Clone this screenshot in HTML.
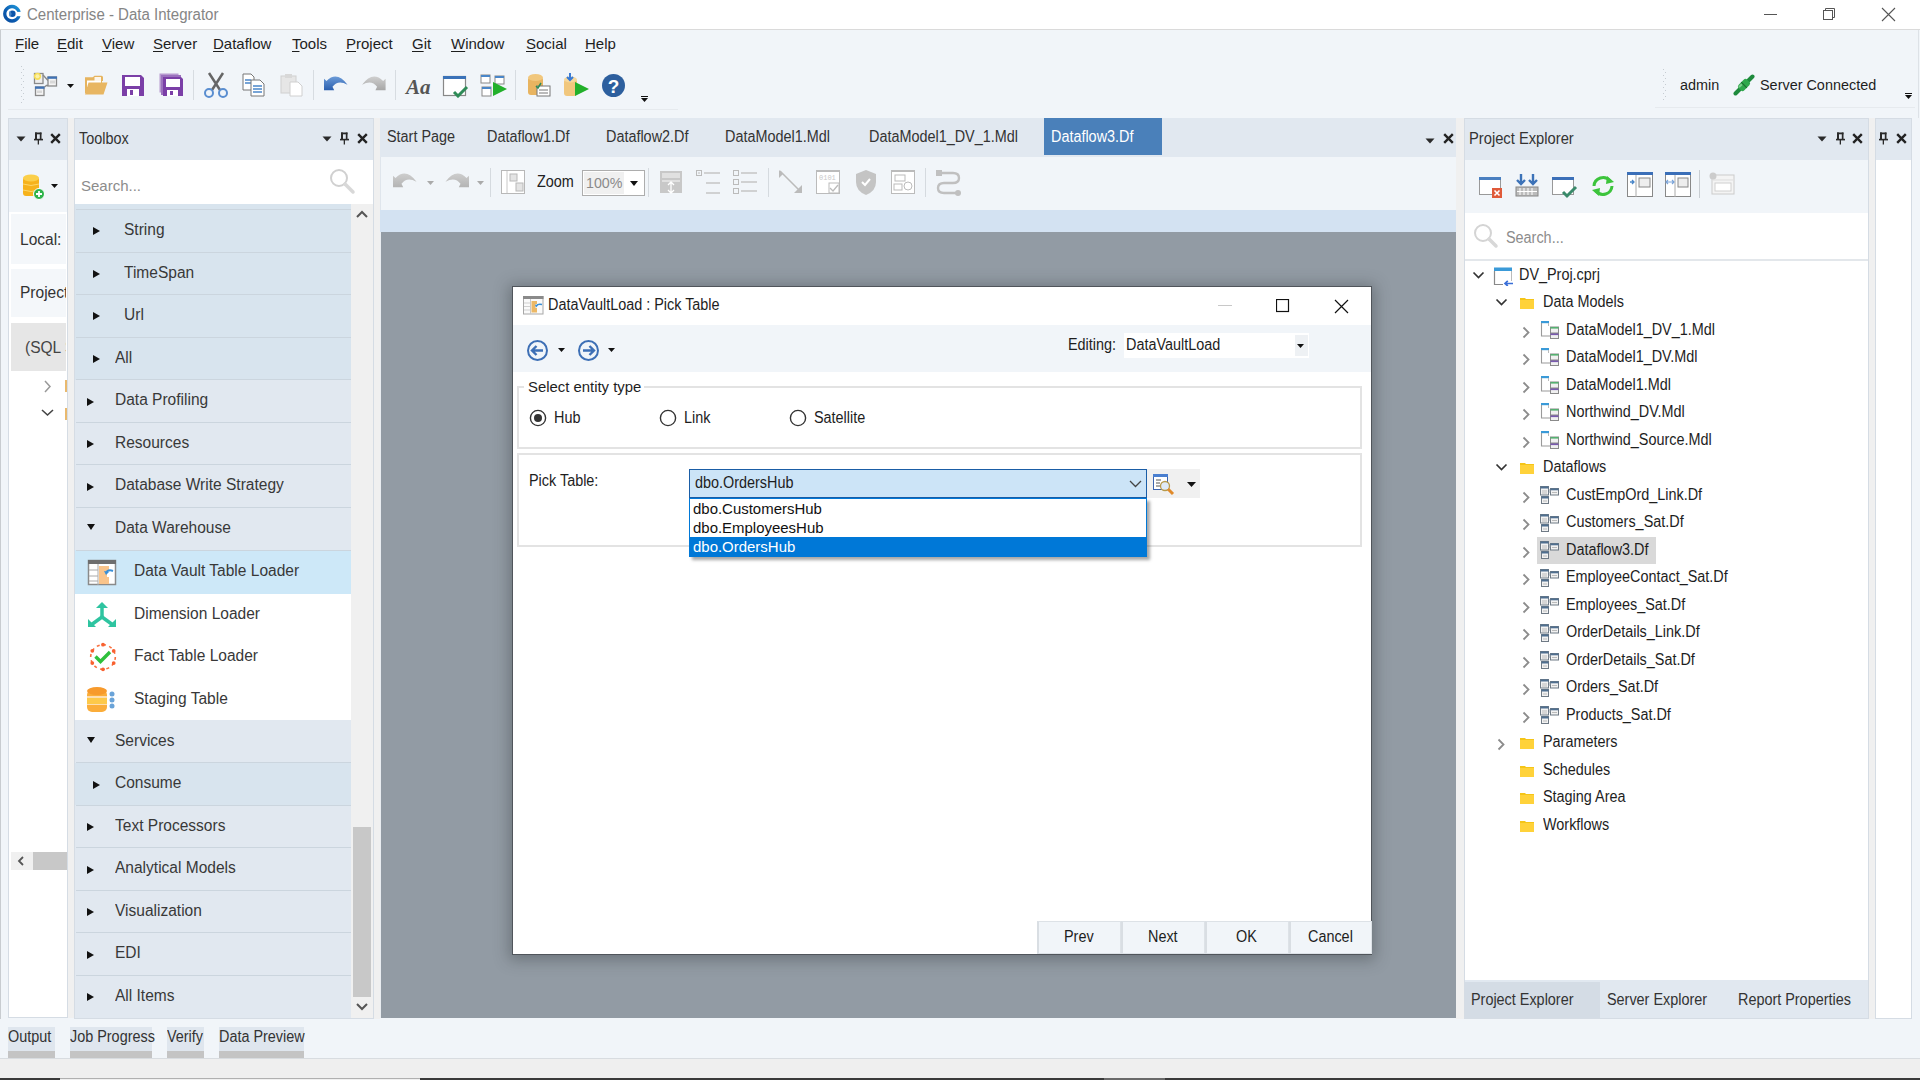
<!DOCTYPE html>
<html><head><meta charset="utf-8"><style>
html,body{margin:0;padding:0}
body{width:1920px;height:1080px;position:relative;overflow:hidden;background:#f1f5f9;font-family:"Liberation Sans",sans-serif;}
.a{position:absolute;box-sizing:border-box}
.t{white-space:nowrap}
</style></head><body>
<div class="a" style="left:0px;top:0px;width:1920px;height:29px;background:#ffffff;"></div>
<div class="a" style="left:0px;top:29px;width:1920px;height:1px;background:#dadada;"></div>
<div class="a t" style="left:27px;top:7px;font-size:16px;line-height:16px;color:#858585;transform:scaleX(0.94);transform-origin:0 0;">Centerprise - Data Integrator</div>
<div class="a t" style="left:15px;top:36px;font-size:15px;line-height:15px;color:#1e1e1e;"><u style="text-decoration-thickness:1px;text-underline-offset:2px">F</u>ile</div>
<div class="a t" style="left:57px;top:36px;font-size:15px;line-height:15px;color:#1e1e1e;"><u style="text-decoration-thickness:1px;text-underline-offset:2px">E</u>dit</div>
<div class="a t" style="left:102px;top:36px;font-size:15px;line-height:15px;color:#1e1e1e;"><u style="text-decoration-thickness:1px;text-underline-offset:2px">V</u>iew</div>
<div class="a t" style="left:153px;top:36px;font-size:15px;line-height:15px;color:#1e1e1e;"><u style="text-decoration-thickness:1px;text-underline-offset:2px">S</u>erver</div>
<div class="a t" style="left:213px;top:36px;font-size:15px;line-height:15px;color:#1e1e1e;"><u style="text-decoration-thickness:1px;text-underline-offset:2px">D</u>ataflow</div>
<div class="a t" style="left:292px;top:36px;font-size:15px;line-height:15px;color:#1e1e1e;"><u style="text-decoration-thickness:1px;text-underline-offset:2px">T</u>ools</div>
<div class="a t" style="left:346px;top:36px;font-size:15px;line-height:15px;color:#1e1e1e;"><u style="text-decoration-thickness:1px;text-underline-offset:2px">P</u>roject</div>
<div class="a t" style="left:412px;top:36px;font-size:15px;line-height:15px;color:#1e1e1e;"><u style="text-decoration-thickness:1px;text-underline-offset:2px">G</u>it</div>
<div class="a t" style="left:451px;top:36px;font-size:15px;line-height:15px;color:#1e1e1e;"><u style="text-decoration-thickness:1px;text-underline-offset:2px">W</u>indow</div>
<div class="a t" style="left:526px;top:36px;font-size:15px;line-height:15px;color:#1e1e1e;"><u style="text-decoration-thickness:1px;text-underline-offset:2px">S</u>ocial</div>
<div class="a t" style="left:585px;top:36px;font-size:15px;line-height:15px;color:#1e1e1e;"><u style="text-decoration-thickness:1px;text-underline-offset:2px">H</u>elp</div>
<div class="a" style="left:0px;top:30px;width:1px;height:1030px;background:#c8ccd0;"></div>
<div class="a" style="left:1918px;top:30px;width:1px;height:1029px;background:#dde2e7;"></div>
<div class="a" style="left:8px;top:109px;width:670px;height:1px;background:#e6eaee;"></div>
<div class="a" style="left:1655px;top:107px;width:260px;height:1px;background:#e6eaee;"></div>
<div class="a" style="left:8px;top:118px;width:60px;height:900px;background:#ffffff;border:1px solid #d5dce4;"></div>
<div class="a" style="left:9px;top:119px;width:58px;height:41px;background:#e1e8f0;"></div>
<div class="a" style="left:9px;top:160px;width:58px;height:52px;background:#f1f5f9;"></div>
<div class="a" style="left:68px;top:118px;width:6px;height:900px;background:#f0f0f0;"></div>
<div class="a" style="left:74px;top:118px;width:300px;height:901px;background:#ffffff;border:1px solid #d5dce4;"></div>
<div class="a" style="left:75px;top:119px;width:298px;height:41px;background:#e1e8f0;"></div>
<div class="a t" style="left:79px;top:131px;font-size:16px;line-height:16px;color:#333;transform:scaleX(0.9);transform-origin:0 0;">Toolbox</div>
<div class="a" style="left:374px;top:118px;width:6px;height:901px;background:#f0f0f0;"></div>
<div class="a" style="left:380px;top:118px;width:1076px;height:900px;background:#929ba4;"></div>
<div class="a" style="left:380px;top:118px;width:1076px;height:39px;background:#e1e8f0;"></div>
<div class="a" style="left:380px;top:157px;width:1076px;height:53px;background:#f1f5f9;"></div>
<div class="a" style="left:380px;top:157px;width:1px;height:53px;background:#dfe5ec;"></div>
<div class="a" style="left:380px;top:210px;width:1px;height:808px;background:#e9edf1;"></div>
<div class="a" style="left:380px;top:210px;width:1076px;height:22px;background:#d3e2f2;"></div>
<div class="a" style="left:1456px;top:118px;width:8px;height:901px;background:#f0f0f0;"></div>
<div class="a" style="left:1464px;top:118px;width:405px;height:901px;background:#ffffff;border:1px solid #d5dce4;"></div>
<div class="a" style="left:1465px;top:119px;width:403px;height:41px;background:#e1e8f0;"></div>
<div class="a" style="left:1465px;top:160px;width:403px;height:53px;background:#f1f5f9;"></div>
<div class="a" style="left:1465px;top:259px;width:403px;height:2px;background:#e3e7eb;"></div>
<div class="a t" style="left:1469px;top:131px;font-size:16px;line-height:16px;color:#333;transform:scaleX(0.92);transform-origin:0 0;">Project Explorer</div>
<div class="a" style="left:1869px;top:118px;width:6px;height:901px;background:#f0f0f0;"></div>
<div class="a" style="left:1875px;top:118px;width:37px;height:901px;background:#ffffff;border:1px solid #d5dce4;"></div>
<div class="a" style="left:1876px;top:119px;width:35px;height:41px;background:#e1e8f0;"></div>
<div class="a" style="left:1912px;top:118px;width:8px;height:901px;background:#f1f5f9;"></div>
<div class="a" style="left:0px;top:1019px;width:1920px;height:39px;background:#f1f5f9;"></div>
<div class="a" style="left:0px;top:1058px;width:1920px;height:1px;background:#d8dce0;"></div>
<div class="a" style="left:0px;top:1059px;width:1920px;height:19px;background:#efefef;"></div>
<div class="a" style="left:0px;top:1078px;width:1920px;height:2px;background:#3a3a3a;"></div>
<div class="a" style="left:60px;top:1078px;width:360px;height:1px;background:#b0b0b0;"></div>
<div class="a" style="left:60px;top:1079px;width:360px;height:1px;background:#f0f0f0;"></div>
<div class="a" style="left:1104px;top:1078px;width:61px;height:2px;background:#6a6a6a;"></div>
<div class="a" style="left:8px;top:1027px;width:47px;height:24px;background:#dfe6ee;"></div>
<div class="a" style="left:8px;top:1051px;width:47px;height:7px;background:#c4c4c4;"></div>
<div class="a t" style="left:8px;top:1029px;font-size:16px;line-height:16px;color:#333;transform:scaleX(0.9);transform-origin:0 0;">Output</div>
<div class="a" style="left:70px;top:1027px;width:82px;height:24px;background:#dfe6ee;"></div>
<div class="a" style="left:70px;top:1051px;width:82px;height:7px;background:#c4c4c4;"></div>
<div class="a t" style="left:70px;top:1029px;font-size:16px;line-height:16px;color:#333;transform:scaleX(0.9);transform-origin:0 0;">Job Progress</div>
<div class="a" style="left:167px;top:1027px;width:37px;height:24px;background:#dfe6ee;"></div>
<div class="a" style="left:167px;top:1051px;width:37px;height:7px;background:#c4c4c4;"></div>
<div class="a t" style="left:167px;top:1029px;font-size:16px;line-height:16px;color:#333;transform:scaleX(0.9);transform-origin:0 0;">Verify</div>
<div class="a" style="left:219px;top:1027px;width:85px;height:24px;background:#dfe6ee;"></div>
<div class="a" style="left:219px;top:1051px;width:85px;height:7px;background:#c4c4c4;"></div>
<div class="a t" style="left:219px;top:1029px;font-size:16px;line-height:16px;color:#333;transform:scaleX(0.9);transform-origin:0 0;">Data Preview</div>
<div class="a" style="left:75px;top:160px;width:298px;height:44px;background:#ffffff;"></div>
<div class="a t" style="left:81px;top:178px;font-size:15px;line-height:15px;color:#8c8c8c;">Search...</div>
<svg class="a" style="left:328px;top:167px;" width="28" height="28" viewBox="0 0 28 28"><circle cx="11" cy="11" r="8" fill="none" stroke="#d0d0d0" stroke-width="2"/><line x1="17" y1="17" x2="25" y2="25" stroke="#d8d8d8" stroke-width="3.5" stroke-linecap="round"/></svg>
<div class="a" style="left:75px;top:204px;width:276px;height:6px;background:#d8e4ee;"></div>
<div class="a" style="left:76px;top:209px;width:275px;height:1px;background:#cbd5de;"></div>
<div class="a" style="left:75px;top:209px;width:276px;height:43px;background:#d8e4ee;"></div>
<svg class="a" style="left:92px;top:226px;" width="9" height="10" viewBox="0 0 9 10"><path d="M1 1 L8 5 L1 9 Z" fill="#111"/></svg>
<div class="a t" style="left:124px;top:222px;font-size:16px;line-height:16px;color:#383838;transform:scaleX(0.97);transform-origin:0 0;">String</div>
<div class="a" style="left:75px;top:252px;width:276px;height:42px;background:#d8e4ee;"></div>
<svg class="a" style="left:92px;top:269px;" width="9" height="10" viewBox="0 0 9 10"><path d="M1 1 L8 5 L1 9 Z" fill="#111"/></svg>
<div class="a t" style="left:124px;top:265px;font-size:16px;line-height:16px;color:#383838;transform:scaleX(0.97);transform-origin:0 0;">TimeSpan</div>
<div class="a" style="left:75px;top:294px;width:276px;height:43px;background:#d8e4ee;"></div>
<svg class="a" style="left:92px;top:311px;" width="9" height="10" viewBox="0 0 9 10"><path d="M1 1 L8 5 L1 9 Z" fill="#111"/></svg>
<div class="a t" style="left:124px;top:307px;font-size:16px;line-height:16px;color:#383838;transform:scaleX(0.97);transform-origin:0 0;">Url</div>
<div class="a" style="left:75px;top:337px;width:276px;height:43px;background:#d8e4ee;"></div>
<svg class="a" style="left:92px;top:354px;" width="9" height="10" viewBox="0 0 9 10"><path d="M1 1 L8 5 L1 9 Z" fill="#111"/></svg>
<div class="a t" style="left:115px;top:350px;font-size:16px;line-height:16px;color:#383838;transform:scaleX(0.97);transform-origin:0 0;">All</div>
<div class="a" style="left:75px;top:380px;width:276px;height:42px;background:#e1e8f0;"></div>
<svg class="a" style="left:86px;top:397px;" width="9" height="10" viewBox="0 0 9 10"><path d="M1 1 L8 5 L1 9 Z" fill="#111"/></svg>
<div class="a t" style="left:115px;top:392px;font-size:16px;line-height:16px;color:#383838;transform:scaleX(0.97);transform-origin:0 0;">Data Profiling</div>
<div class="a" style="left:75px;top:422px;width:276px;height:43px;background:#e1e8f0;"></div>
<svg class="a" style="left:86px;top:439px;" width="9" height="10" viewBox="0 0 9 10"><path d="M1 1 L8 5 L1 9 Z" fill="#111"/></svg>
<div class="a t" style="left:115px;top:435px;font-size:16px;line-height:16px;color:#383838;transform:scaleX(0.97);transform-origin:0 0;">Resources</div>
<div class="a" style="left:75px;top:465px;width:276px;height:42px;background:#e1e8f0;"></div>
<svg class="a" style="left:86px;top:482px;" width="9" height="10" viewBox="0 0 9 10"><path d="M1 1 L8 5 L1 9 Z" fill="#111"/></svg>
<div class="a t" style="left:115px;top:477px;font-size:16px;line-height:16px;color:#383838;transform:scaleX(0.97);transform-origin:0 0;">Database Write Strategy</div>
<div class="a" style="left:75px;top:507px;width:276px;height:43px;background:#e1e8f0;"></div>
<svg class="a" style="left:86px;top:523px;" width="10" height="8" viewBox="0 0 10 8"><path d="M1 1 L9 1 L5 7 Z" fill="#111"/></svg>
<div class="a t" style="left:115px;top:520px;font-size:16px;line-height:16px;color:#383838;transform:scaleX(0.97);transform-origin:0 0;">Data Warehouse</div>
<div class="a" style="left:75px;top:550px;width:276px;height:44px;background:#cde8f8;"></div>
<div class="a t" style="left:134px;top:563px;font-size:16px;line-height:16px;color:#383838;transform:scaleX(0.97);transform-origin:0 0;">Data Vault Table Loader</div>
<svg class="a" style="left:87px;top:559px;" width="30" height="28" viewBox="0 0 30 28"><rect x="1.5" y="1.5" width="27" height="24" fill="#fff" stroke="#8a8a8a" stroke-width="1.5"/><rect x="1" y="1" width="28" height="4" fill="#6e6e6e"/><line x1="2" y1="11" x2="11" y2="11" stroke="#aaa"/><line x1="2" y1="17" x2="11" y2="17" stroke="#aaa"/><line x1="2" y1="22" x2="11" y2="22" stroke="#aaa"/><line x1="11" y1="5" x2="11" y2="26" stroke="#aaa"/><path d="M12 7 H22 V12 H20 V18 H22 V25 H12 Z" fill="#f9c48b"/><path d="M26 12 Q21 10 19 14" fill="none" stroke="#3a8fd6" stroke-width="2"/><path d="M17 12 L19 16 L22 13 Z" fill="#3a8fd6"/></svg>
<div class="a" style="left:75px;top:594px;width:276px;height:41px;background:#ffffff;"></div>
<div class="a t" style="left:134px;top:606px;font-size:16px;line-height:16px;color:#383838;transform:scaleX(0.97);transform-origin:0 0;">Dimension Loader</div>
<svg class="a" style="left:87px;top:601px;" width="30" height="28" viewBox="0 0 30 28"><g stroke="#2ec4a0" stroke-width="3.5" fill="none" stroke-linecap="round"><line x1="15" y1="4" x2="15" y2="16"/><line x1="15" y1="16" x2="4" y2="24"/><line x1="15" y1="16" x2="26" y2="24"/></g><path d="M9 7 L15 1 L21 7 Z" fill="#2ec4a0"/><path d="M1 18 L1 26 L9 26 Z" fill="#2ec4a0"/><path d="M29 18 L29 26 L21 26 Z" fill="#2ec4a0"/></svg>
<div class="a" style="left:75px;top:635px;width:276px;height:42px;background:#ffffff;"></div>
<div class="a t" style="left:134px;top:648px;font-size:16px;line-height:16px;color:#383838;transform:scaleX(0.97);transform-origin:0 0;">Fact Table Loader</div>
<svg class="a" style="left:88px;top:642px;" width="30" height="30" viewBox="0 0 30 30"><circle cx="15" cy="15" r="12.3" fill="none" stroke="#f8703f" stroke-width="1.6" stroke-dasharray="3 3.4"/><circle cx="15.0" cy="2.7" r="1.9" fill="#f8602f"/><circle cx="25.7" cy="8.9" r="1.9" fill="#f8602f"/><circle cx="25.7" cy="21.1" r="1.9" fill="#f8602f"/><circle cx="15.0" cy="27.3" r="1.9" fill="#f8602f"/><circle cx="4.3" cy="21.1" r="1.9" fill="#f8602f"/><circle cx="4.3" cy="8.8" r="1.9" fill="#f8602f"/><path d="M7.5 14.5 L12.5 19.5 L22 10" fill="none" stroke="#2ec03c" stroke-width="3.4"/></svg>
<div class="a" style="left:75px;top:677px;width:276px;height:43px;background:#ffffff;"></div>
<div class="a t" style="left:134px;top:691px;font-size:16px;line-height:16px;color:#383838;transform:scaleX(0.97);transform-origin:0 0;">Staging Table</div>
<svg class="a" style="left:86px;top:686px;" width="30" height="28" viewBox="0 0 30 28"><rect x="1" y="4" width="20" height="22" rx="5" fill="#fbad3a"/><ellipse cx="11" cy="5" rx="10" ry="4" fill="#f79a2c"/><line x1="1" y1="11" x2="21" y2="11" stroke="#fff" stroke-width="1.2"/><line x1="1" y1="18" x2="21" y2="18" stroke="#fff" stroke-width="1.2"/><rect x="1" y="12" width="20" height="6" fill="#fdc94a"/><circle cx="26" cy="8" r="2.5" fill="#6aa3d8"/><circle cx="26" cy="14" r="2.5" fill="#6aa3d8"/><circle cx="26" cy="20" r="2.5" fill="#6aa3d8"/></svg>
<div class="a" style="left:75px;top:720px;width:276px;height:43px;background:#e1e8f0;"></div>
<svg class="a" style="left:86px;top:736px;" width="10" height="8" viewBox="0 0 10 8"><path d="M1 1 L9 1 L5 7 Z" fill="#111"/></svg>
<div class="a t" style="left:115px;top:733px;font-size:16px;line-height:16px;color:#383838;transform:scaleX(0.97);transform-origin:0 0;">Services</div>
<div class="a" style="left:75px;top:763px;width:276px;height:42px;background:#d8e4ee;"></div>
<svg class="a" style="left:92px;top:780px;" width="9" height="10" viewBox="0 0 9 10"><path d="M1 1 L8 5 L1 9 Z" fill="#111"/></svg>
<div class="a t" style="left:115px;top:775px;font-size:16px;line-height:16px;color:#383838;transform:scaleX(0.97);transform-origin:0 0;">Consume</div>
<div class="a" style="left:75px;top:805px;width:276px;height:43px;background:#e1e8f0;"></div>
<svg class="a" style="left:86px;top:822px;" width="9" height="10" viewBox="0 0 9 10"><path d="M1 1 L8 5 L1 9 Z" fill="#111"/></svg>
<div class="a t" style="left:115px;top:818px;font-size:16px;line-height:16px;color:#383838;transform:scaleX(0.97);transform-origin:0 0;">Text Processors</div>
<div class="a" style="left:75px;top:848px;width:276px;height:42px;background:#e1e8f0;"></div>
<svg class="a" style="left:86px;top:865px;" width="9" height="10" viewBox="0 0 9 10"><path d="M1 1 L8 5 L1 9 Z" fill="#111"/></svg>
<div class="a t" style="left:115px;top:860px;font-size:16px;line-height:16px;color:#383838;transform:scaleX(0.97);transform-origin:0 0;">Analytical Models</div>
<div class="a" style="left:75px;top:890px;width:276px;height:43px;background:#e1e8f0;"></div>
<svg class="a" style="left:86px;top:907px;" width="9" height="10" viewBox="0 0 9 10"><path d="M1 1 L8 5 L1 9 Z" fill="#111"/></svg>
<div class="a t" style="left:115px;top:903px;font-size:16px;line-height:16px;color:#383838;transform:scaleX(0.97);transform-origin:0 0;">Visualization</div>
<div class="a" style="left:75px;top:933px;width:276px;height:42px;background:#e1e8f0;"></div>
<svg class="a" style="left:86px;top:950px;" width="9" height="10" viewBox="0 0 9 10"><path d="M1 1 L8 5 L1 9 Z" fill="#111"/></svg>
<div class="a t" style="left:115px;top:945px;font-size:16px;line-height:16px;color:#383838;transform:scaleX(0.97);transform-origin:0 0;">EDI</div>
<div class="a" style="left:75px;top:975px;width:276px;height:43px;background:#e1e8f0;"></div>
<svg class="a" style="left:86px;top:992px;" width="9" height="10" viewBox="0 0 9 10"><path d="M1 1 L8 5 L1 9 Z" fill="#111"/></svg>
<div class="a t" style="left:115px;top:988px;font-size:16px;line-height:16px;color:#383838;transform:scaleX(0.97);transform-origin:0 0;">All Items</div>
<div class="a" style="left:76px;top:209px;width:275px;height:1px;background:#cbd5de;"></div>
<div class="a" style="left:76px;top:252px;width:275px;height:1px;background:#cbd5de;"></div>
<div class="a" style="left:76px;top:294px;width:275px;height:1px;background:#cbd5de;"></div>
<div class="a" style="left:76px;top:337px;width:275px;height:1px;background:#cbd5de;"></div>
<div class="a" style="left:76px;top:379px;width:275px;height:1px;background:#cbd5de;"></div>
<div class="a" style="left:76px;top:422px;width:275px;height:1px;background:#cbd5de;"></div>
<div class="a" style="left:76px;top:464px;width:275px;height:1px;background:#cbd5de;"></div>
<div class="a" style="left:76px;top:507px;width:275px;height:1px;background:#cbd5de;"></div>
<div class="a" style="left:76px;top:550px;width:275px;height:1px;background:#cbd5de;"></div>
<div class="a" style="left:76px;top:762px;width:275px;height:1px;background:#cbd5de;"></div>
<div class="a" style="left:76px;top:805px;width:275px;height:1px;background:#cbd5de;"></div>
<div class="a" style="left:76px;top:847px;width:275px;height:1px;background:#cbd5de;"></div>
<div class="a" style="left:76px;top:890px;width:275px;height:1px;background:#cbd5de;"></div>
<div class="a" style="left:76px;top:932px;width:275px;height:1px;background:#cbd5de;"></div>
<div class="a" style="left:76px;top:975px;width:275px;height:1px;background:#cbd5de;"></div>
<div class="a" style="left:351px;top:204px;width:22px;height:814px;background:#f0f0f0;"></div>
<div class="a" style="left:353px;top:827px;width:18px;height:170px;background:#c8c8c8;"></div>
<svg class="a" style="left:355px;top:209px;" width="14" height="10" viewBox="0 0 14 10"><path d="M2 8 L7 3 L12 8" fill="none" stroke="#555" stroke-width="2"/></svg>
<svg class="a" style="left:355px;top:1002px;" width="14" height="10" viewBox="0 0 14 10"><path d="M2 2 L7 7 L12 2" fill="none" stroke="#555" stroke-width="2"/></svg>
<svg class="a" style="left:0px;top:0px;" width="26" height="28" viewBox="0 0 26 28"><defs><linearGradient id="lg1" x1="1" y1="0" x2="0" y2="1"><stop offset="0" stop-color="#22a0e0"/><stop offset="0.6" stop-color="#0b5bb0"/><stop offset="1" stop-color="#0a4a9a"/></linearGradient></defs><path fill-rule="evenodd" fill="url(#lg1)" d="M12 4.85 A8.9 8.9 0 1 1 11.99 4.85 Z M12 8.15 A5.6 5.6 0 1 0 12.01 8.15 Z"/><rect x="16.5" y="11.9" width="8" height="4.3" fill="#fff"/><circle cx="12.3" cy="13.75" r="3.3" fill="#0b55aa"/><path d="M9 12 H11 M9 14 H11.5 M9.5 16 H11" stroke="#7fb0e0" stroke-width="1"/></svg>
<div class="a" style="left:1764px;top:14px;width:13px;height:1px;background:#555;"></div>
<svg class="a" style="left:1822px;top:7px;" width="14" height="14" viewBox="0 0 14 14"><rect x="1.5" y="3.5" width="9" height="9" fill="none" stroke="#555"/><path d="M3.5 3.5 V1.5 H12.5 V10.5 H10.5" fill="none" stroke="#555"/></svg>
<svg class="a" style="left:1881px;top:7px;" width="15" height="15" viewBox="0 0 15 15"><path d="M1 1 L14 14 M14 1 L1 14" stroke="#555" stroke-width="1.1"/></svg>
<svg class="a" style="left:21px;top:66px;" width="4" height="38" viewBox="0 0 4 38"><rect x="0" y="0" width="1" height="1" fill="#c6ccd2"/><rect x="2" y="3" width="1" height="1" fill="#c6ccd2"/><rect x="0" y="6" width="1" height="1" fill="#c6ccd2"/><rect x="2" y="9" width="1" height="1" fill="#c6ccd2"/><rect x="0" y="12" width="1" height="1" fill="#c6ccd2"/><rect x="2" y="15" width="1" height="1" fill="#c6ccd2"/><rect x="0" y="18" width="1" height="1" fill="#c6ccd2"/><rect x="2" y="21" width="1" height="1" fill="#c6ccd2"/><rect x="0" y="24" width="1" height="1" fill="#c6ccd2"/><rect x="2" y="27" width="1" height="1" fill="#c6ccd2"/><rect x="0" y="30" width="1" height="1" fill="#c6ccd2"/><rect x="2" y="33" width="1" height="1" fill="#c6ccd2"/><rect x="0" y="36" width="1" height="1" fill="#c6ccd2"/></svg>
<svg class="a" style="left:1663px;top:69px;" width="4" height="32" viewBox="0 0 4 32"><rect x="0" y="0" width="1" height="1" fill="#c6ccd2"/><rect x="2" y="3" width="1" height="1" fill="#c6ccd2"/><rect x="0" y="6" width="1" height="1" fill="#c6ccd2"/><rect x="2" y="9" width="1" height="1" fill="#c6ccd2"/><rect x="0" y="12" width="1" height="1" fill="#c6ccd2"/><rect x="2" y="15" width="1" height="1" fill="#c6ccd2"/><rect x="0" y="18" width="1" height="1" fill="#c6ccd2"/><rect x="2" y="21" width="1" height="1" fill="#c6ccd2"/><rect x="0" y="24" width="1" height="1" fill="#c6ccd2"/><rect x="2" y="27" width="1" height="1" fill="#c6ccd2"/><rect x="0" y="30" width="1" height="1" fill="#c6ccd2"/></svg>
<svg class="a" style="left:28px;top:66px;" width="32" height="32" viewBox="0 0 32 32"><rect x="6.5" y="7.5" width="8.5" height="10" fill="#eee" stroke="#8a8a8a" stroke-width="1.3"/><circle cx="9.5" cy="10.3" r="3.6" fill="#f6de5a"/><circle cx="9.5" cy="10.3" r="2" fill="#fbf1a8"/><path d="M15 9 L20 14.5 M16.5 21 L18.5 19.5 H20" fill="none" stroke="#8a8a8a" stroke-width="1.4"/><rect x="20" y="11" width="8.5" height="9" fill="#f4f4f4" stroke="#8a8a8a" stroke-width="1.3"/><rect x="19.5" y="10.5" width="9.5" height="2.3" fill="#3f72b5"/><rect x="22" y="14.5" width="5" height="3" fill="#d8d8d8"/><rect x="7.5" y="21" width="8.5" height="8.5" fill="#f4f4f4" stroke="#8a8a8a" stroke-width="1.3"/><rect x="7" y="20.5" width="9.5" height="2.3" fill="#3f72b5"/><rect x="9" y="24.5" width="5" height="2.5" fill="#d8d8d8"/></svg>
<svg class="a" style="left:67px;top:84px;" width="8" height="5" viewBox="0 0 8 5"><path d="M0 0 H7 L3.5 4 Z" fill="#111"/></svg>
<svg class="a" style="left:84px;top:75px;" width="25" height="21" viewBox="0 0 25 21"><path d="M1 2.5 H8.5 L10.5 0.8 H17.5 Q19 0.8 19 2.5 V6 H1 Z" fill="#e6b45f"/><path d="M1 2.5 H18 V18 H1 Z" fill="#e6b45f"/><path d="M3 5.5 H17 V12 H3 Z" fill="#fff"/><path d="M10.5 2 H17 V6 H10.5 Z" fill="#fdf6ea"/><path d="M4.5 7.5 H23.5 L19.5 19.5 H1 Z" fill="#e8b662"/></svg>
<svg class="a" style="left:121px;top:74px;" width="24" height="23" viewBox="0 0 24 23"><path d="M1 1 H20 L23 4 V22 H1 Z" fill="#7b3fa7"/><rect x="4" y="3" width="15" height="9" fill="#fff"/><rect x="6" y="15" width="12" height="7" fill="#fff"/><rect x="9" y="16" width="3" height="5" fill="#7b3fa7"/></svg>
<svg class="a" style="left:159px;top:73px;" width="25" height="24" viewBox="0 0 25 24"><rect x="0.5" y="0.5" width="19" height="19" fill="#b89ad0"/><rect x="2" y="2" width="20" height="20" fill="#9b72bd"/><path d="M4 4 H22 L24 6 V23 H4 Z" fill="#7b3fa7"/><rect x="7" y="6" width="14" height="8" fill="#fff"/><rect x="8" y="17" width="11" height="6" fill="#fff"/><rect x="11" y="18" width="3" height="4" fill="#7b3fa7"/></svg>
<div class="a" style="left:193px;top:70px;width:1px;height:30px;background:#d7dce1;"></div>
<svg class="a" style="left:203px;top:72px;" width="26" height="26" viewBox="0 0 26 26"><path d="M6 1 L17 18 M20 1 L9 18" stroke="#666" stroke-width="2.5"/><circle cx="6" cy="21" r="4" fill="none" stroke="#5a8ed0" stroke-width="2"/><circle cx="20" cy="21" r="4" fill="none" stroke="#5a8ed0" stroke-width="2"/></svg>
<svg class="a" style="left:242px;top:73px;" width="24" height="24" viewBox="0 0 24 24"><path d="M1 1 H9 L12 4 V17 H1 Z" fill="#fff" stroke="#777"/><line x1="3" y1="7" x2="9" y2="7" stroke="#4a86c8" stroke-width="1.5"/><line x1="3" y1="10" x2="9" y2="10" stroke="#4a86c8" stroke-width="1.5"/><path d="M9 7 H18 L22 11 V23 H9 Z" fill="#fff" stroke="#777"/><line x1="11" y1="13" x2="20" y2="13" stroke="#4a86c8" stroke-width="1.5"/><line x1="11" y1="16" x2="20" y2="16" stroke="#4a86c8" stroke-width="1.5"/><line x1="11" y1="19" x2="20" y2="19" stroke="#4a86c8" stroke-width="1.5"/></svg>
<svg class="a" style="left:280px;top:73px;" width="24" height="24" viewBox="0 0 24 24"><rect x="1" y="3" width="15" height="17" fill="#e6e6e6" stroke="#d0d0d0"/><rect x="5" y="1" width="7" height="4" fill="#d8d8d8"/><path d="M10 9 H18 L22 13 V23 H10 Z" fill="#fff" stroke="#d0d0d0"/></svg>
<div class="a" style="left:313px;top:70px;width:1px;height:30px;background:#d7dce1;"></div>
<svg class="a" style="left:318px;top:68px;" width="76" height="32" viewBox="0 0 76 32"><defs><linearGradient id="ug" x1="0" y1="0" x2="0" y2="1"><stop offset="0" stop-color="#6b9bd8"/><stop offset="1" stop-color="#2b5fae"/></linearGradient><linearGradient id="rg" x1="0" y1="0" x2="0" y2="1"><stop offset="0" stop-color="#cfcfcf"/><stop offset="1" stop-color="#a6a6a6"/></linearGradient></defs><path d="M6 10.7 L8.5 13 Q19 2.5 29.5 16.8 Q20 11.4 14.5 18.8 L16.2 22.2 L6 22.2 Z" fill="url(#ug)"/><path d="M6 10.7 L8.5 13 Q19 2.5 29.5 16.8 Q20 11.4 14.5 18.8 L16.2 22.2 L6 22.2 Z" fill="url(#rg)" transform="translate(73.6 0) scale(-1 1)"/></svg>
<div class="a" style="left:395px;top:70px;width:1px;height:30px;background:#d7dce1;"></div>
<div class="a t" style="left:406px;top:76px;font-family:'Liberation Serif',serif;font-style:italic;font-weight:bold;font-size:21px;line-height:22px;color:#555">Aa</div>
<svg class="a" style="left:442px;top:74px;" width="27" height="24" viewBox="0 0 27 24"><rect x="1.5" y="2.5" width="22" height="19" fill="#fff" stroke="#888" stroke-width="1.2"/><rect x="1" y="2" width="23" height="3" fill="#3b72b8"/><path d="M12 18 L16 22 L25 13" fill="none" stroke="#2e8b57" stroke-width="3"/></svg>
<svg class="a" style="left:480px;top:73px;" width="28" height="25" viewBox="0 0 28 25"><rect x="1" y="2" width="9" height="8" fill="#fff" stroke="#888"/><rect x="1" y="2" width="9" height="2" fill="#4a86c8"/><rect x="15" y="3" width="9" height="8" fill="#fff" stroke="#888"/><rect x="15" y="3" width="9" height="2" fill="#4a86c8"/><rect x="2" y="14" width="9" height="9" fill="#fff" stroke="#888"/><rect x="2" y="14" width="9" height="2" fill="#4a86c8"/><path d="M13 9 L27 16 L13 23 Z" fill="#22b02a"/></svg>
<div class="a" style="left:515px;top:70px;width:1px;height:30px;background:#d7dce1;"></div>
<svg class="a" style="left:527px;top:73px;" width="26" height="25" viewBox="0 0 26 25"><rect x="1" y="4" width="15" height="18" rx="3" fill="#e8b460"/><ellipse cx="8.5" cy="4.5" rx="7.5" ry="3.5" fill="#f1c77d"/><rect x="10" y="13" width="13" height="10" fill="#fff" stroke="#777"/><line x1="12" y1="17" x2="21" y2="17" stroke="#777"/><line x1="12" y1="20" x2="21" y2="20" stroke="#777"/><path d="M9 13 L11 15 L14 10" stroke="#2e8b57" stroke-width="1.5" fill="none"/></svg>
<svg class="a" style="left:563px;top:72px;" width="27" height="26" viewBox="0 0 27 26"><rect x="1" y="7" width="13" height="17" rx="3" fill="#f1c77d"/><ellipse cx="7.5" cy="7.5" rx="6.5" ry="3" fill="#f6d79a"/><path d="M7 1 V8 M4 5 L7 8 L10 5" stroke="#3a7bd5" stroke-width="2" fill="none"/><path d="M12 10 L26 17 L12 24 Z" fill="#22b02a"/></svg>
<svg class="a" style="left:601px;top:73px;" width="25" height="25" viewBox="0 0 25 25"><circle cx="12.5" cy="12.5" r="11.5" fill="#2d5f9e"/><text x="12.5" y="19.5" text-anchor="middle" font-family="Liberation Sans" font-weight="bold" font-size="19" fill="#fff">?</text></svg>
<svg class="a" style="left:641px;top:96px;" width="7" height="8" viewBox="0 0 7 8"><rect x="0" y="0" width="7" height="1" fill="#111"/><path d="M0 2 H7 L3.5 6 Z" fill="#111"/></svg>
<svg class="a" style="left:1905px;top:93px;" width="7" height="8" viewBox="0 0 7 8"><rect x="0" y="0" width="7" height="1" fill="#111"/><path d="M0 2 H7 L3.5 6 Z" fill="#111"/></svg>
<div class="a t" style="left:1680px;top:77px;font-size:15.5px;line-height:15.5px;color:#1e1e1e;transform:scaleX(0.93);transform-origin:0 0;">admin</div>
<svg class="a" style="left:1733px;top:74px;" width="22" height="22" viewBox="0 0 22 22"><path d="M2.5 19.5 L8 14" stroke="#1e8a3c" stroke-width="4" stroke-linecap="round"/><path d="M14 8 L19.5 2.5" stroke="#1e8a3c" stroke-width="4" stroke-linecap="round"/><g transform="rotate(-45 11 11)"><rect x="5" y="7" width="12" height="8" rx="2.5" fill="#2fa84c"/><line x1="11" y1="7" x2="11" y2="15" stroke="#1a6e30" stroke-width="1.2"/><rect x="6" y="8" width="4" height="2" fill="#7fd08f"/></g></svg>
<div class="a t" style="left:1760px;top:77px;font-size:15.5px;line-height:15.5px;color:#1e1e1e;transform:scaleX(0.93);transform-origin:0 0;">Server Connected</div>
<svg class="a" style="left:16px;top:136px;" width="10" height="6" viewBox="0 0 10 6"><path d="M0.5 0.5 H9.5 L5 5.5 Z" fill="#2a2a2a"/></svg>
<svg class="a" style="left:34px;top:132px;" width="10" height="13" viewBox="0 0 10 13"><rect x="1" y="0.5" width="6.5" height="1.8" fill="#2a2a2a"/><rect x="1" y="0.5" width="2" height="7" fill="#2a2a2a"/><rect x="5.8" y="0.5" width="1.7" height="7" fill="#2a2a2a"/><rect x="0" y="6.8" width="9" height="1.6" fill="#2a2a2a"/><rect x="3.7" y="8" width="1.3" height="4.5" fill="#2a2a2a"/></svg>
<svg class="a" style="left:50px;top:133px;" width="11" height="11" viewBox="0 0 11 11"><path d="M1.2 1.2 L9.8 9.8 M9.8 1.2 L1.2 9.8" stroke="#222" stroke-width="2.4"/></svg>
<svg class="a" style="left:322px;top:136px;" width="10" height="6" viewBox="0 0 10 6"><path d="M0.5 0.5 H9.5 L5 5.5 Z" fill="#2a2a2a"/></svg>
<svg class="a" style="left:340px;top:132px;" width="10" height="13" viewBox="0 0 10 13"><rect x="1" y="0.5" width="6.5" height="1.8" fill="#2a2a2a"/><rect x="1" y="0.5" width="2" height="7" fill="#2a2a2a"/><rect x="5.8" y="0.5" width="1.7" height="7" fill="#2a2a2a"/><rect x="0" y="6.8" width="9" height="1.6" fill="#2a2a2a"/><rect x="3.7" y="8" width="1.3" height="4.5" fill="#2a2a2a"/></svg>
<svg class="a" style="left:357px;top:133px;" width="11" height="11" viewBox="0 0 11 11"><path d="M1.2 1.2 L9.8 9.8 M9.8 1.2 L1.2 9.8" stroke="#222" stroke-width="2.4"/></svg>
<svg class="a" style="left:1425px;top:138px;" width="10" height="6" viewBox="0 0 10 6"><path d="M0.5 0.5 H9.5 L5 5.5 Z" fill="#2a2a2a"/></svg>
<svg class="a" style="left:1443px;top:133px;" width="11" height="11" viewBox="0 0 11 11"><path d="M1.2 1.2 L9.8 9.8 M9.8 1.2 L1.2 9.8" stroke="#222" stroke-width="2.4"/></svg>
<svg class="a" style="left:1817px;top:136px;" width="10" height="6" viewBox="0 0 10 6"><path d="M0.5 0.5 H9.5 L5 5.5 Z" fill="#2a2a2a"/></svg>
<svg class="a" style="left:1836px;top:132px;" width="10" height="13" viewBox="0 0 10 13"><rect x="1" y="0.5" width="6.5" height="1.8" fill="#2a2a2a"/><rect x="1" y="0.5" width="2" height="7" fill="#2a2a2a"/><rect x="5.8" y="0.5" width="1.7" height="7" fill="#2a2a2a"/><rect x="0" y="6.8" width="9" height="1.6" fill="#2a2a2a"/><rect x="3.7" y="8" width="1.3" height="4.5" fill="#2a2a2a"/></svg>
<svg class="a" style="left:1852px;top:133px;" width="11" height="11" viewBox="0 0 11 11"><path d="M1.2 1.2 L9.8 9.8 M9.8 1.2 L1.2 9.8" stroke="#222" stroke-width="2.4"/></svg>
<svg class="a" style="left:1879px;top:132px;" width="10" height="13" viewBox="0 0 10 13"><rect x="1" y="0.5" width="6.5" height="1.8" fill="#2a2a2a"/><rect x="1" y="0.5" width="2" height="7" fill="#2a2a2a"/><rect x="5.8" y="0.5" width="1.7" height="7" fill="#2a2a2a"/><rect x="0" y="6.8" width="9" height="1.6" fill="#2a2a2a"/><rect x="3.7" y="8" width="1.3" height="4.5" fill="#2a2a2a"/></svg>
<svg class="a" style="left:1896px;top:133px;" width="11" height="11" viewBox="0 0 11 11"><path d="M1.2 1.2 L9.8 9.8 M9.8 1.2 L1.2 9.8" stroke="#222" stroke-width="2.4"/></svg>
<svg class="a" style="left:21px;top:173px;" width="28" height="27" viewBox="0 0 28 27"><rect x="2" y="4" width="16" height="19" rx="3" fill="#f6b21c"/><ellipse cx="10" cy="5" rx="8" ry="3.5" fill="#fbcf4a"/><path d="M2 11 Q10 14 18 11" stroke="#fdd76a" fill="none"/><path d="M2 17 Q10 20 18 17" stroke="#fdd76a" fill="none"/><circle cx="18" cy="21" r="5.5" fill="#2eb34a" stroke="#fff" stroke-width="1"/><path d="M18 18 V24 M15 21 H21" stroke="#fff" stroke-width="1.8"/></svg>
<svg class="a" style="left:51px;top:184px;" width="8" height="5" viewBox="0 0 8 5"><path d="M0 0 H7 L3.5 4 Z" fill="#111"/></svg>
<div class="a" style="left:11px;top:214px;width:55px;height:50px;background:#f4f7fa;"></div>
<div class="a t" style="left:20px;top:232px;font-size:16px;line-height:16px;color:#333;transform:scaleX(0.97);transform-origin:0 0;">Local:</div>
<div class="a" style="left:11px;top:269px;width:55px;height:48px;background:#f4f7fa;"></div>
<div class="a" style="left:11px;top:268px;width:55px;height:49px;overflow:hidden"><div class="a t" style="left:9px;top:17px;font-size:16px;line-height:16px;color:#333;transform:scaleX(0.97);transform-origin:0 0">Project</div></div>
<div class="a" style="left:11px;top:323px;width:55px;height:48px;background:#e6e6e6;"></div>
<div class="a" style="left:11px;top:322px;width:55px;height:49px;overflow:hidden"><div class="a t" style="left:14px;top:18px;font-size:16px;line-height:16px;color:#444;transform:scaleX(0.97);transform-origin:0 0">(SQL Server)</div></div>
<svg class="a" style="left:43px;top:380px;" width="9" height="13" viewBox="0 0 9 13"><path d="M2 1 L7 6.5 L2 12" fill="none" stroke="#999" stroke-width="1.5"/></svg>
<svg class="a" style="left:41px;top:408px;" width="13" height="9" viewBox="0 0 13 9"><path d="M1 2 L6.5 7 L12 2" fill="none" stroke="#444" stroke-width="1.6"/></svg>
<div class="a" style="left:65px;top:380px;width:2px;height:12px;background:#e9b96e;"></div>
<div class="a" style="left:65px;top:408px;width:2px;height:12px;background:#e9b96e;"></div>
<div class="a" style="left:11px;top:852px;width:56px;height:18px;background:#f0f0f0;"></div>
<div class="a" style="left:33px;top:852px;width:34px;height:18px;background:#c8c8c8;"></div>
<svg class="a" style="left:16px;top:855px;" width="10" height="12" viewBox="0 0 10 12"><path d="M7 2 L3 6 L7 10" fill="none" stroke="#555" stroke-width="1.8"/></svg>
<div class="a t" style="left:387px;top:129px;font-size:16px;line-height:16px;color:#333;transform:scaleX(0.9);transform-origin:0 0;">Start Page</div>
<div class="a t" style="left:487px;top:129px;font-size:16px;line-height:16px;color:#333;transform:scaleX(0.9);transform-origin:0 0;">Dataflow1.Df</div>
<div class="a t" style="left:606px;top:129px;font-size:16px;line-height:16px;color:#333;transform:scaleX(0.9);transform-origin:0 0;">Dataflow2.Df</div>
<div class="a t" style="left:725px;top:129px;font-size:16px;line-height:16px;color:#333;transform:scaleX(0.9);transform-origin:0 0;">DataModel1.Mdl</div>
<div class="a t" style="left:869px;top:129px;font-size:16px;line-height:16px;color:#333;transform:scaleX(0.9);transform-origin:0 0;">DataModel1_DV_1.Mdl</div>
<div class="a" style="left:1044px;top:118px;width:118px;height:37px;background:#4a80ba;"></div>
<div class="a t" style="left:1051px;top:129px;font-size:16px;line-height:16px;color:#ffffff;transform:scaleX(0.9);transform-origin:0 0;">Dataflow3.Df</div>
<svg class="a" style="left:387px;top:165px;" width="100" height="32" viewBox="0 0 100 32"><defs><linearGradient id="dg" x1="0" y1="0" x2="0" y2="1"><stop offset="0" stop-color="#cdcdcd"/><stop offset="1" stop-color="#b4b4b4"/></linearGradient></defs><path d="M6 10.7 L8.5 13 Q19 2.5 29.5 16.8 Q20 11.4 14.5 18.8 L16.2 22.2 L6 22.2 Z" fill="url(#dg)" transform="translate(0 0)"/><path d="M6 10.7 L8.5 13 Q19 2.5 29.5 16.8 Q20 11.4 14.5 18.8 L16.2 22.2 L6 22.2 Z" fill="url(#dg)" transform="translate(88 0) scale(-1 1)"/></svg>
<svg class="a" style="left:427px;top:181px;" width="8" height="5" viewBox="0 0 8 5"><path d="M0 0 H7 L3.5 4 Z" fill="#aaa"/></svg>
<svg class="a" style="left:477px;top:181px;" width="8" height="5" viewBox="0 0 8 5"><path d="M0 0 H7 L3.5 4 Z" fill="#aaa"/></svg>
<div class="a" style="left:490px;top:168px;width:1px;height:29px;background:#d5dadf;"></div>
<svg class="a" style="left:500px;top:169px;" width="27" height="27" viewBox="0 0 27 27"><rect x="1.5" y="1.5" width="23" height="23" fill="#fff" stroke="#b8b8b8"/><line x1="7" y1="2" x2="7" y2="24" stroke="#c8c8c8"/><rect x="10" y="5" width="7" height="7" fill="#e4e4e4" stroke="#b8b8b8"/><rect x="16" y="14" width="7" height="8" fill="#e4e4e4" stroke="#b8b8b8"/></svg>
<div class="a t" style="left:537px;top:174px;font-size:16px;line-height:16px;color:#222;transform:scaleX(0.9);transform-origin:0 0;">Zoom</div>
<div class="a" style="left:582px;top:170px;width:63px;height:26px;background:#ffffff;border:1px solid #adadad;"></div>
<div class="a" style="left:584px;top:172px;width:40px;height:22px;background:#f0f0f0;"></div>
<div class="a t" style="left:586px;top:175px;font-size:15px;line-height:15px;color:#8a8a8a;transform:scaleX(0.95);transform-origin:0 0;">100%</div>
<svg class="a" style="left:630px;top:181px;" width="9" height="5" viewBox="0 0 9 5"><path d="M0 0 H8 L4 5 Z" fill="#111"/></svg>
<div class="a" style="left:648px;top:168px;width:1px;height:29px;background:#d5dadf;"></div>
<svg class="a" style="left:659px;top:170px;" width="25" height="26" viewBox="0 0 25 26"><rect x="1" y="1" width="22" height="22" fill="#c8c8c8"/><rect x="3" y="3" width="18" height="5" fill="#e0e0e0"/><rect x="3" y="10" width="18" height="2" fill="#e0e0e0"/><path d="M12 13 V22 M9 15 L12 12 L15 15 M9 20 L12 23 L15 20" stroke="#fff" stroke-width="1.3" fill="none"/></svg>
<svg class="a" style="left:695px;top:169px;" width="27" height="27" viewBox="0 0 27 27"><rect x="1.5" y="1.5" width="5" height="5" fill="none" stroke="#bbb"/><line x1="3" y1="4" x2="5" y2="4" stroke="#bbb"/><line x1="9" y1="4" x2="25" y2="4" stroke="#c4c4c4" stroke-width="1.5"/><line x1="11" y1="14" x2="25" y2="14" stroke="#c4c4c4" stroke-width="1.5"/><line x1="11" y1="24" x2="25" y2="24" stroke="#c4c4c4" stroke-width="1.5"/></svg>
<svg class="a" style="left:732px;top:169px;" width="27" height="27" viewBox="0 0 27 27"><g fill="none" stroke="#bbb"><rect x="1.5" y="1.5" width="5" height="5"/><rect x="1.5" y="10.5" width="5" height="5"/><rect x="1.5" y="19.5" width="5" height="5"/></g><g stroke="#c4c4c4" stroke-width="1.5"><line x1="9" y1="4" x2="25" y2="4"/><line x1="9" y1="13" x2="25" y2="13"/><line x1="9" y1="22" x2="25" y2="22"/></g></svg>
<div class="a" style="left:768px;top:168px;width:1px;height:29px;background:#d5dadf;"></div>
<svg class="a" style="left:778px;top:169px;" width="26" height="26" viewBox="0 0 26 26"><line x1="2" y1="2" x2="22" y2="22" stroke="#bbb" stroke-width="1.6"/><path d="M1 1 L1 9 L5 5 Z" fill="#bbb"/><path d="M24 24 L16 24 L24 16 Z" fill="#bbb"/></svg>
<svg class="a" style="left:815px;top:169px;" width="27" height="27" viewBox="0 0 27 27"><rect x="1.5" y="1.5" width="23" height="23" fill="#fff" stroke="#bbb"/><rect x="1" y="1" width="24" height="2" fill="#bbb"/><text x="4" y="11" font-size="7" fill="#c8c8c8" font-family="Liberation Mono">0101</text><rect x="14" y="14" width="10" height="10" fill="none" stroke="#bbb"/><path d="M15 19 L18 22 L23 16" stroke="#bbb" fill="none" stroke-width="1.3"/></svg>
<svg class="a" style="left:854px;top:169px;" width="24" height="27" viewBox="0 0 24 27"><path d="M12 1 L22 5 V13 Q22 22 12 26 Q2 22 2 13 V5 Z" fill="#c4c4c4"/><path d="M8 13 L11 16 L16 10" stroke="#fff" stroke-width="2" fill="none"/></svg>
<svg class="a" style="left:890px;top:169px;" width="27" height="27" viewBox="0 0 27 27"><rect x="1.5" y="1.5" width="23" height="23" fill="#fff" stroke="#bbb"/><rect x="1" y="1" width="24" height="2" fill="#bbb"/><rect x="5" y="6" width="10" height="6" fill="none" stroke="#bbb"/><rect x="4" y="15" width="8" height="6" fill="none" stroke="#bbb"/><circle cx="18" cy="17" r="4" fill="none" stroke="#bbb"/></svg>
<div class="a" style="left:925px;top:168px;width:1px;height:29px;background:#d5dadf;"></div>
<svg class="a" style="left:935px;top:169px;" width="27" height="27" viewBox="0 0 27 27"><path d="M4 4 H18 Q24 4 24 9 Q24 14 18 14 H9 Q3 14 3 19 Q3 24 9 24 H23" fill="none" stroke="#c0c0c0" stroke-width="2.4"/><rect x="1" y="1" width="6" height="6" fill="#c0c0c0"/><circle cx="23" cy="24" r="3" fill="#c0c0c0"/></svg>
<svg class="a" style="left:1478px;top:174px;" width="26" height="25" viewBox="0 0 26 25"><rect x="1.5" y="3.5" width="21" height="17" fill="#fff" stroke="#999"/><rect x="1" y="3" width="22" height="3" fill="#4a7fc0"/><rect x="14" y="14" width="10" height="10" fill="#e05a3a"/><path d="M16.5 16.5 L21.5 21.5 M21.5 16.5 L16.5 21.5" stroke="#fff" stroke-width="1.6"/></svg>
<svg class="a" style="left:1515px;top:173px;" width="25" height="25" viewBox="0 0 25 25"><path d="M6 1 V10 M2 7 L6 11 L10 7 M18 1 V10 M14 7 L18 11 L22 7" stroke="#3c72b8" stroke-width="2.4" fill="none"/><rect x="1" y="14" width="22" height="9" fill="#bbb" stroke="#888"/><g stroke="#fff" stroke-width="1"><line x1="5" y1="15" x2="5" y2="22"/><line x1="9" y1="15" x2="9" y2="22"/><line x1="13" y1="15" x2="13" y2="22"/><line x1="17" y1="15" x2="17" y2="22"/><line x1="2" y1="18.5" x2="22" y2="18.5"/></g></svg>
<svg class="a" style="left:1551px;top:174px;" width="27" height="25" viewBox="0 0 27 25"><rect x="1.5" y="3.5" width="21" height="17" fill="#fff" stroke="#999"/><rect x="1" y="3" width="22" height="3" fill="#3b6fb8"/><path d="M12 18 L16 22 L25 13" fill="none" stroke="#3a8a6a" stroke-width="3"/></svg>
<svg class="a" style="left:1590px;top:174px;" width="26" height="23" viewBox="0 0 26 23"><path d="M4 12 A9 9 0 0 1 20 7" fill="none" stroke="#3cc43c" stroke-width="3"/><path d="M17 2 L24 8 L16 10 Z" fill="#3cc43c"/><path d="M22 12 A9 9 0 0 1 6 17" fill="none" stroke="#3cc43c" stroke-width="3"/><path d="M9 22 L2 16 L10 14 Z" fill="#3cc43c"/></svg>
<svg class="a" style="left:1627px;top:172px;" width="27" height="26" viewBox="0 0 27 26"><rect x="0.5" y="0.5" width="25" height="24" fill="#fff" stroke="#888"/><rect x="0" y="0" width="26" height="3" fill="#3b6fb8"/><line x1="9" y1="3" x2="9" y2="25" stroke="#aaa"/><rect x="12" y="6" width="11" height="9" fill="#eee" stroke="#888"/><path d="M3 10 H7 M5 8 L7 10 L5 12" stroke="#4a86c8" stroke-width="1.3" fill="none"/></svg>
<svg class="a" style="left:1665px;top:172px;" width="27" height="26" viewBox="0 0 27 26"><rect x="0.5" y="0.5" width="25" height="24" fill="#fff" stroke="#888"/><rect x="0" y="0" width="26" height="3" fill="#3b6fb8"/><line x1="10" y1="3" x2="10" y2="25" stroke="#aaa"/><rect x="13" y="6" width="10" height="9" fill="#eee" stroke="#888"/><path d="M1 10 H9 M3 8 L1 10 L3 12 M7 8 L9 10 L7 12" stroke="#7aa3d8" stroke-width="1.2" fill="none"/></svg>
<div class="a" style="left:1699px;top:170px;width:1px;height:28px;background:#c8cdd2;"></div>
<svg class="a" style="left:1709px;top:172px;" width="28" height="26" viewBox="0 0 28 26"><rect x="3" y="3" width="22" height="19" fill="#f4f4f4" stroke="#ccc"/><line x1="4" y1="8" x2="24" y2="8" stroke="#ddd"/><rect x="6" y="11" width="16" height="8" fill="#fff" stroke="#d0d0d0"/><circle cx="4" cy="4" r="3.5" fill="#ccc"/></svg>
<svg class="a" style="left:1472px;top:222px;" width="28" height="28" viewBox="0 0 28 28"><circle cx="11" cy="11" r="8" fill="none" stroke="#d4d4d4" stroke-width="2"/><line x1="17" y1="17" x2="24" y2="24" stroke="#d8d8d8" stroke-width="3.5" stroke-linecap="round"/></svg>
<div class="a t" style="left:1506px;top:230px;font-size:16px;line-height:16px;color:#8c8c8c;transform:scaleX(0.9);transform-origin:0 0;">Search...</div>
<svg class="a" style="left:1472px;top:271px;" width="13" height="8" viewBox="0 0 13 8"><path d="M1.5 1.5 L6.5 6.5 L11.5 1.5" fill="none" stroke="#333" stroke-width="1.7"/></svg>
<svg class="a" style="left:1493px;top:267px;" width="21" height="19" viewBox="0 0 21 19"><path d="M1.5 4 V17.5 H10" fill="none" stroke="#888" stroke-width="1.2"/><path d="M18.5 4 V14" fill="none" stroke="#bbb" stroke-width="1"/><rect x="1" y="0.5" width="18" height="3.5" fill="#3a9ad8"/><path d="M20 16.5 H12 M14.8 13.8 L12 16.5 L14.8 19" stroke="#3a6fd8" stroke-width="1.7" fill="none"/></svg>
<div class="a t" style="left:1519px;top:267px;font-size:16px;line-height:16px;color:#1e1e1e;transform:scaleX(0.9);transform-origin:0 0;">DV_Proj.cprj</div>
<svg class="a" style="left:1495px;top:298px;" width="13" height="8" viewBox="0 0 13 8"><path d="M1.5 1.5 L6.5 6.5 L11.5 1.5" fill="none" stroke="#333" stroke-width="1.7"/></svg>
<svg class="a" style="left:1520px;top:297px;" width="14" height="12" viewBox="0 0 14 12"><path d="M0 1 H5 L6 2 H14 V12 H0 Z" fill="#f5c518"/><rect x="0" y="3" width="14" height="9" fill="#ffd23a"/></svg>
<div class="a t" style="left:1543px;top:294px;font-size:16px;line-height:16px;color:#1e1e1e;transform:scaleX(0.9);transform-origin:0 0;">Data Models</div>
<svg class="a" style="left:1522px;top:326px;" width="8" height="13" viewBox="0 0 8 13"><path d="M1.5 1.5 L6.5 6.5 L1.5 11.5" fill="none" stroke="#8c8c8c" stroke-width="1.8"/></svg>
<svg class="a" style="left:1540px;top:320px;" width="20" height="19" viewBox="0 0 20 19"><rect x="1" y="1" width="8" height="2.2" fill="#3a9ad8"/><path d="M1.5 3 V16 H10" fill="none" stroke="#9a9a9a" stroke-width="1.1"/><line x1="8.5" y1="3" x2="8.5" y2="6" stroke="#bbb"/><rect x="10.5" y="7" width="8" height="6" fill="#f0f0f0" stroke="#8a8a8a"/><rect x="10.5" y="7" width="8" height="1.6" fill="#55b070"/><rect x="10.5" y="13.5" width="8" height="5" fill="#f0f0f0" stroke="#8a8a8a"/><rect x="10.5" y="13.5" width="8" height="1.6" fill="#7a5ab0"/></svg>
<div class="a t" style="left:1566px;top:322px;font-size:16px;line-height:16px;color:#1e1e1e;transform:scaleX(0.9);transform-origin:0 0;">DataModel1_DV_1.Mdl</div>
<svg class="a" style="left:1522px;top:353px;" width="8" height="13" viewBox="0 0 8 13"><path d="M1.5 1.5 L6.5 6.5 L1.5 11.5" fill="none" stroke="#8c8c8c" stroke-width="1.8"/></svg>
<svg class="a" style="left:1540px;top:347px;" width="20" height="19" viewBox="0 0 20 19"><rect x="1" y="1" width="8" height="2.2" fill="#3a9ad8"/><path d="M1.5 3 V16 H10" fill="none" stroke="#9a9a9a" stroke-width="1.1"/><line x1="8.5" y1="3" x2="8.5" y2="6" stroke="#bbb"/><rect x="10.5" y="7" width="8" height="6" fill="#f0f0f0" stroke="#8a8a8a"/><rect x="10.5" y="7" width="8" height="1.6" fill="#55b070"/><rect x="10.5" y="13.5" width="8" height="5" fill="#f0f0f0" stroke="#8a8a8a"/><rect x="10.5" y="13.5" width="8" height="1.6" fill="#7a5ab0"/></svg>
<div class="a t" style="left:1566px;top:349px;font-size:16px;line-height:16px;color:#1e1e1e;transform:scaleX(0.9);transform-origin:0 0;">DataModel1_DV.Mdl</div>
<svg class="a" style="left:1522px;top:381px;" width="8" height="13" viewBox="0 0 8 13"><path d="M1.5 1.5 L6.5 6.5 L1.5 11.5" fill="none" stroke="#8c8c8c" stroke-width="1.8"/></svg>
<svg class="a" style="left:1540px;top:375px;" width="20" height="19" viewBox="0 0 20 19"><rect x="1" y="1" width="8" height="2.2" fill="#3a9ad8"/><path d="M1.5 3 V16 H10" fill="none" stroke="#9a9a9a" stroke-width="1.1"/><line x1="8.5" y1="3" x2="8.5" y2="6" stroke="#bbb"/><rect x="10.5" y="7" width="8" height="6" fill="#f0f0f0" stroke="#8a8a8a"/><rect x="10.5" y="7" width="8" height="1.6" fill="#55b070"/><rect x="10.5" y="13.5" width="8" height="5" fill="#f0f0f0" stroke="#8a8a8a"/><rect x="10.5" y="13.5" width="8" height="1.6" fill="#7a5ab0"/></svg>
<div class="a t" style="left:1566px;top:377px;font-size:16px;line-height:16px;color:#1e1e1e;transform:scaleX(0.9);transform-origin:0 0;">DataModel1.Mdl</div>
<svg class="a" style="left:1522px;top:408px;" width="8" height="13" viewBox="0 0 8 13"><path d="M1.5 1.5 L6.5 6.5 L1.5 11.5" fill="none" stroke="#8c8c8c" stroke-width="1.8"/></svg>
<svg class="a" style="left:1540px;top:402px;" width="20" height="19" viewBox="0 0 20 19"><rect x="1" y="1" width="8" height="2.2" fill="#3a9ad8"/><path d="M1.5 3 V16 H10" fill="none" stroke="#9a9a9a" stroke-width="1.1"/><line x1="8.5" y1="3" x2="8.5" y2="6" stroke="#bbb"/><rect x="10.5" y="7" width="8" height="6" fill="#f0f0f0" stroke="#8a8a8a"/><rect x="10.5" y="7" width="8" height="1.6" fill="#55b070"/><rect x="10.5" y="13.5" width="8" height="5" fill="#f0f0f0" stroke="#8a8a8a"/><rect x="10.5" y="13.5" width="8" height="1.6" fill="#7a5ab0"/></svg>
<div class="a t" style="left:1566px;top:404px;font-size:16px;line-height:16px;color:#1e1e1e;transform:scaleX(0.9);transform-origin:0 0;">Northwind_DV.Mdl</div>
<svg class="a" style="left:1522px;top:436px;" width="8" height="13" viewBox="0 0 8 13"><path d="M1.5 1.5 L6.5 6.5 L1.5 11.5" fill="none" stroke="#8c8c8c" stroke-width="1.8"/></svg>
<svg class="a" style="left:1540px;top:430px;" width="20" height="19" viewBox="0 0 20 19"><rect x="1" y="1" width="8" height="2.2" fill="#3a9ad8"/><path d="M1.5 3 V16 H10" fill="none" stroke="#9a9a9a" stroke-width="1.1"/><line x1="8.5" y1="3" x2="8.5" y2="6" stroke="#bbb"/><rect x="10.5" y="7" width="8" height="6" fill="#f0f0f0" stroke="#8a8a8a"/><rect x="10.5" y="7" width="8" height="1.6" fill="#55b070"/><rect x="10.5" y="13.5" width="8" height="5" fill="#f0f0f0" stroke="#8a8a8a"/><rect x="10.5" y="13.5" width="8" height="1.6" fill="#7a5ab0"/></svg>
<div class="a t" style="left:1566px;top:432px;font-size:16px;line-height:16px;color:#1e1e1e;transform:scaleX(0.9);transform-origin:0 0;">Northwind_Source.Mdl</div>
<svg class="a" style="left:1495px;top:463px;" width="13" height="8" viewBox="0 0 13 8"><path d="M1.5 1.5 L6.5 6.5 L11.5 1.5" fill="none" stroke="#333" stroke-width="1.7"/></svg>
<svg class="a" style="left:1520px;top:462px;" width="14" height="12" viewBox="0 0 14 12"><path d="M0 1 H5 L6 2 H14 V12 H0 Z" fill="#f5c518"/><rect x="0" y="3" width="14" height="9" fill="#ffd23a"/></svg>
<div class="a t" style="left:1543px;top:459px;font-size:16px;line-height:16px;color:#1e1e1e;transform:scaleX(0.9);transform-origin:0 0;">Dataflows</div>
<svg class="a" style="left:1522px;top:491px;" width="8" height="13" viewBox="0 0 8 13"><path d="M1.5 1.5 L6.5 6.5 L1.5 11.5" fill="none" stroke="#8c8c8c" stroke-width="1.8"/></svg>
<svg class="a" style="left:1540px;top:486px;" width="20" height="18" viewBox="0 0 20 18"><rect x="0.5" y="0.5" width="8" height="8.5" fill="#f2f2f2" stroke="#6f7a85"/><rect x="0.5" y="0.5" width="8" height="2" fill="#4f6f90"/><line x1="2" y1="5" x2="7" y2="5" stroke="#bbb"/><line x1="2" y1="7" x2="7" y2="7" stroke="#bbb"/><rect x="10.5" y="2.5" width="8" height="6.5" fill="#f2f2f2" stroke="#6f7a85"/><rect x="10.5" y="2.5" width="8" height="1.8" fill="#4f6f90"/><line x1="12" y1="6.5" x2="17" y2="6.5" stroke="#bbb"/><rect x="1.5" y="10.5" width="7" height="7" fill="#f2f2f2" stroke="#6f7a85"/><rect x="1.5" y="10.5" width="7" height="2" fill="#4f6f90"/><line x1="3" y1="15" x2="7" y2="15" stroke="#bbb"/><path d="M8.5 3 L10.5 5 M8.5 7 L10.5 5" stroke="#8a96a2"/></svg>
<div class="a t" style="left:1566px;top:487px;font-size:16px;line-height:16px;color:#1e1e1e;transform:scaleX(0.9);transform-origin:0 0;">CustEmpOrd_Link.Df</div>
<svg class="a" style="left:1522px;top:518px;" width="8" height="13" viewBox="0 0 8 13"><path d="M1.5 1.5 L6.5 6.5 L1.5 11.5" fill="none" stroke="#8c8c8c" stroke-width="1.8"/></svg>
<svg class="a" style="left:1540px;top:514px;" width="20" height="18" viewBox="0 0 20 18"><rect x="0.5" y="0.5" width="8" height="8.5" fill="#f2f2f2" stroke="#6f7a85"/><rect x="0.5" y="0.5" width="8" height="2" fill="#4f6f90"/><line x1="2" y1="5" x2="7" y2="5" stroke="#bbb"/><line x1="2" y1="7" x2="7" y2="7" stroke="#bbb"/><rect x="10.5" y="2.5" width="8" height="6.5" fill="#f2f2f2" stroke="#6f7a85"/><rect x="10.5" y="2.5" width="8" height="1.8" fill="#4f6f90"/><line x1="12" y1="6.5" x2="17" y2="6.5" stroke="#bbb"/><rect x="1.5" y="10.5" width="7" height="7" fill="#f2f2f2" stroke="#6f7a85"/><rect x="1.5" y="10.5" width="7" height="2" fill="#4f6f90"/><line x1="3" y1="15" x2="7" y2="15" stroke="#bbb"/><path d="M8.5 3 L10.5 5 M8.5 7 L10.5 5" stroke="#8a96a2"/></svg>
<div class="a t" style="left:1566px;top:514px;font-size:16px;line-height:16px;color:#1e1e1e;transform:scaleX(0.9);transform-origin:0 0;">Customers_Sat.Df</div>
<div class="a" style="left:1537px;top:537px;width:119px;height:27px;background:#d9d9d9;"></div>
<svg class="a" style="left:1522px;top:546px;" width="8" height="13" viewBox="0 0 8 13"><path d="M1.5 1.5 L6.5 6.5 L1.5 11.5" fill="none" stroke="#8c8c8c" stroke-width="1.8"/></svg>
<svg class="a" style="left:1540px;top:541px;" width="20" height="18" viewBox="0 0 20 18"><rect x="0.5" y="0.5" width="8" height="8.5" fill="#f2f2f2" stroke="#6f7a85"/><rect x="0.5" y="0.5" width="8" height="2" fill="#4f6f90"/><line x1="2" y1="5" x2="7" y2="5" stroke="#bbb"/><line x1="2" y1="7" x2="7" y2="7" stroke="#bbb"/><rect x="10.5" y="2.5" width="8" height="6.5" fill="#f2f2f2" stroke="#6f7a85"/><rect x="10.5" y="2.5" width="8" height="1.8" fill="#4f6f90"/><line x1="12" y1="6.5" x2="17" y2="6.5" stroke="#bbb"/><rect x="1.5" y="10.5" width="7" height="7" fill="#f2f2f2" stroke="#6f7a85"/><rect x="1.5" y="10.5" width="7" height="2" fill="#4f6f90"/><line x1="3" y1="15" x2="7" y2="15" stroke="#bbb"/><path d="M8.5 3 L10.5 5 M8.5 7 L10.5 5" stroke="#8a96a2"/></svg>
<div class="a t" style="left:1566px;top:542px;font-size:16px;line-height:16px;color:#1e1e1e;transform:scaleX(0.9);transform-origin:0 0;">Dataflow3.Df</div>
<svg class="a" style="left:1522px;top:573px;" width="8" height="13" viewBox="0 0 8 13"><path d="M1.5 1.5 L6.5 6.5 L1.5 11.5" fill="none" stroke="#8c8c8c" stroke-width="1.8"/></svg>
<svg class="a" style="left:1540px;top:569px;" width="20" height="18" viewBox="0 0 20 18"><rect x="0.5" y="0.5" width="8" height="8.5" fill="#f2f2f2" stroke="#6f7a85"/><rect x="0.5" y="0.5" width="8" height="2" fill="#4f6f90"/><line x1="2" y1="5" x2="7" y2="5" stroke="#bbb"/><line x1="2" y1="7" x2="7" y2="7" stroke="#bbb"/><rect x="10.5" y="2.5" width="8" height="6.5" fill="#f2f2f2" stroke="#6f7a85"/><rect x="10.5" y="2.5" width="8" height="1.8" fill="#4f6f90"/><line x1="12" y1="6.5" x2="17" y2="6.5" stroke="#bbb"/><rect x="1.5" y="10.5" width="7" height="7" fill="#f2f2f2" stroke="#6f7a85"/><rect x="1.5" y="10.5" width="7" height="2" fill="#4f6f90"/><line x1="3" y1="15" x2="7" y2="15" stroke="#bbb"/><path d="M8.5 3 L10.5 5 M8.5 7 L10.5 5" stroke="#8a96a2"/></svg>
<div class="a t" style="left:1566px;top:569px;font-size:16px;line-height:16px;color:#1e1e1e;transform:scaleX(0.9);transform-origin:0 0;">EmployeeContact_Sat.Df</div>
<svg class="a" style="left:1522px;top:601px;" width="8" height="13" viewBox="0 0 8 13"><path d="M1.5 1.5 L6.5 6.5 L1.5 11.5" fill="none" stroke="#8c8c8c" stroke-width="1.8"/></svg>
<svg class="a" style="left:1540px;top:596px;" width="20" height="18" viewBox="0 0 20 18"><rect x="0.5" y="0.5" width="8" height="8.5" fill="#f2f2f2" stroke="#6f7a85"/><rect x="0.5" y="0.5" width="8" height="2" fill="#4f6f90"/><line x1="2" y1="5" x2="7" y2="5" stroke="#bbb"/><line x1="2" y1="7" x2="7" y2="7" stroke="#bbb"/><rect x="10.5" y="2.5" width="8" height="6.5" fill="#f2f2f2" stroke="#6f7a85"/><rect x="10.5" y="2.5" width="8" height="1.8" fill="#4f6f90"/><line x1="12" y1="6.5" x2="17" y2="6.5" stroke="#bbb"/><rect x="1.5" y="10.5" width="7" height="7" fill="#f2f2f2" stroke="#6f7a85"/><rect x="1.5" y="10.5" width="7" height="2" fill="#4f6f90"/><line x1="3" y1="15" x2="7" y2="15" stroke="#bbb"/><path d="M8.5 3 L10.5 5 M8.5 7 L10.5 5" stroke="#8a96a2"/></svg>
<div class="a t" style="left:1566px;top:597px;font-size:16px;line-height:16px;color:#1e1e1e;transform:scaleX(0.9);transform-origin:0 0;">Employees_Sat.Df</div>
<svg class="a" style="left:1522px;top:628px;" width="8" height="13" viewBox="0 0 8 13"><path d="M1.5 1.5 L6.5 6.5 L1.5 11.5" fill="none" stroke="#8c8c8c" stroke-width="1.8"/></svg>
<svg class="a" style="left:1540px;top:624px;" width="20" height="18" viewBox="0 0 20 18"><rect x="0.5" y="0.5" width="8" height="8.5" fill="#f2f2f2" stroke="#6f7a85"/><rect x="0.5" y="0.5" width="8" height="2" fill="#4f6f90"/><line x1="2" y1="5" x2="7" y2="5" stroke="#bbb"/><line x1="2" y1="7" x2="7" y2="7" stroke="#bbb"/><rect x="10.5" y="2.5" width="8" height="6.5" fill="#f2f2f2" stroke="#6f7a85"/><rect x="10.5" y="2.5" width="8" height="1.8" fill="#4f6f90"/><line x1="12" y1="6.5" x2="17" y2="6.5" stroke="#bbb"/><rect x="1.5" y="10.5" width="7" height="7" fill="#f2f2f2" stroke="#6f7a85"/><rect x="1.5" y="10.5" width="7" height="2" fill="#4f6f90"/><line x1="3" y1="15" x2="7" y2="15" stroke="#bbb"/><path d="M8.5 3 L10.5 5 M8.5 7 L10.5 5" stroke="#8a96a2"/></svg>
<div class="a t" style="left:1566px;top:624px;font-size:16px;line-height:16px;color:#1e1e1e;transform:scaleX(0.9);transform-origin:0 0;">OrderDetails_Link.Df</div>
<svg class="a" style="left:1522px;top:656px;" width="8" height="13" viewBox="0 0 8 13"><path d="M1.5 1.5 L6.5 6.5 L1.5 11.5" fill="none" stroke="#8c8c8c" stroke-width="1.8"/></svg>
<svg class="a" style="left:1540px;top:651px;" width="20" height="18" viewBox="0 0 20 18"><rect x="0.5" y="0.5" width="8" height="8.5" fill="#f2f2f2" stroke="#6f7a85"/><rect x="0.5" y="0.5" width="8" height="2" fill="#4f6f90"/><line x1="2" y1="5" x2="7" y2="5" stroke="#bbb"/><line x1="2" y1="7" x2="7" y2="7" stroke="#bbb"/><rect x="10.5" y="2.5" width="8" height="6.5" fill="#f2f2f2" stroke="#6f7a85"/><rect x="10.5" y="2.5" width="8" height="1.8" fill="#4f6f90"/><line x1="12" y1="6.5" x2="17" y2="6.5" stroke="#bbb"/><rect x="1.5" y="10.5" width="7" height="7" fill="#f2f2f2" stroke="#6f7a85"/><rect x="1.5" y="10.5" width="7" height="2" fill="#4f6f90"/><line x1="3" y1="15" x2="7" y2="15" stroke="#bbb"/><path d="M8.5 3 L10.5 5 M8.5 7 L10.5 5" stroke="#8a96a2"/></svg>
<div class="a t" style="left:1566px;top:652px;font-size:16px;line-height:16px;color:#1e1e1e;transform:scaleX(0.9);transform-origin:0 0;">OrderDetails_Sat.Df</div>
<svg class="a" style="left:1522px;top:683px;" width="8" height="13" viewBox="0 0 8 13"><path d="M1.5 1.5 L6.5 6.5 L1.5 11.5" fill="none" stroke="#8c8c8c" stroke-width="1.8"/></svg>
<svg class="a" style="left:1540px;top:679px;" width="20" height="18" viewBox="0 0 20 18"><rect x="0.5" y="0.5" width="8" height="8.5" fill="#f2f2f2" stroke="#6f7a85"/><rect x="0.5" y="0.5" width="8" height="2" fill="#4f6f90"/><line x1="2" y1="5" x2="7" y2="5" stroke="#bbb"/><line x1="2" y1="7" x2="7" y2="7" stroke="#bbb"/><rect x="10.5" y="2.5" width="8" height="6.5" fill="#f2f2f2" stroke="#6f7a85"/><rect x="10.5" y="2.5" width="8" height="1.8" fill="#4f6f90"/><line x1="12" y1="6.5" x2="17" y2="6.5" stroke="#bbb"/><rect x="1.5" y="10.5" width="7" height="7" fill="#f2f2f2" stroke="#6f7a85"/><rect x="1.5" y="10.5" width="7" height="2" fill="#4f6f90"/><line x1="3" y1="15" x2="7" y2="15" stroke="#bbb"/><path d="M8.5 3 L10.5 5 M8.5 7 L10.5 5" stroke="#8a96a2"/></svg>
<div class="a t" style="left:1566px;top:679px;font-size:16px;line-height:16px;color:#1e1e1e;transform:scaleX(0.9);transform-origin:0 0;">Orders_Sat.Df</div>
<svg class="a" style="left:1522px;top:711px;" width="8" height="13" viewBox="0 0 8 13"><path d="M1.5 1.5 L6.5 6.5 L1.5 11.5" fill="none" stroke="#8c8c8c" stroke-width="1.8"/></svg>
<svg class="a" style="left:1540px;top:706px;" width="20" height="18" viewBox="0 0 20 18"><rect x="0.5" y="0.5" width="8" height="8.5" fill="#f2f2f2" stroke="#6f7a85"/><rect x="0.5" y="0.5" width="8" height="2" fill="#4f6f90"/><line x1="2" y1="5" x2="7" y2="5" stroke="#bbb"/><line x1="2" y1="7" x2="7" y2="7" stroke="#bbb"/><rect x="10.5" y="2.5" width="8" height="6.5" fill="#f2f2f2" stroke="#6f7a85"/><rect x="10.5" y="2.5" width="8" height="1.8" fill="#4f6f90"/><line x1="12" y1="6.5" x2="17" y2="6.5" stroke="#bbb"/><rect x="1.5" y="10.5" width="7" height="7" fill="#f2f2f2" stroke="#6f7a85"/><rect x="1.5" y="10.5" width="7" height="2" fill="#4f6f90"/><line x1="3" y1="15" x2="7" y2="15" stroke="#bbb"/><path d="M8.5 3 L10.5 5 M8.5 7 L10.5 5" stroke="#8a96a2"/></svg>
<div class="a t" style="left:1566px;top:707px;font-size:16px;line-height:16px;color:#1e1e1e;transform:scaleX(0.9);transform-origin:0 0;">Products_Sat.Df</div>
<svg class="a" style="left:1497px;top:738px;" width="8" height="13" viewBox="0 0 8 13"><path d="M1.5 1.5 L6.5 6.5 L1.5 11.5" fill="none" stroke="#8c8c8c" stroke-width="1.8"/></svg>
<svg class="a" style="left:1520px;top:737px;" width="14" height="12" viewBox="0 0 14 12"><path d="M0 1 H5 L6 2 H14 V12 H0 Z" fill="#f5c518"/><rect x="0" y="3" width="14" height="9" fill="#ffd23a"/></svg>
<div class="a t" style="left:1543px;top:734px;font-size:16px;line-height:16px;color:#1e1e1e;transform:scaleX(0.9);transform-origin:0 0;">Parameters</div>
<svg class="a" style="left:1520px;top:765px;" width="14" height="12" viewBox="0 0 14 12"><path d="M0 1 H5 L6 2 H14 V12 H0 Z" fill="#f5c518"/><rect x="0" y="3" width="14" height="9" fill="#ffd23a"/></svg>
<div class="a t" style="left:1543px;top:762px;font-size:16px;line-height:16px;color:#1e1e1e;transform:scaleX(0.9);transform-origin:0 0;">Schedules</div>
<svg class="a" style="left:1520px;top:792px;" width="14" height="12" viewBox="0 0 14 12"><path d="M0 1 H5 L6 2 H14 V12 H0 Z" fill="#f5c518"/><rect x="0" y="3" width="14" height="9" fill="#ffd23a"/></svg>
<div class="a t" style="left:1543px;top:789px;font-size:16px;line-height:16px;color:#1e1e1e;transform:scaleX(0.9);transform-origin:0 0;">Staging Area</div>
<svg class="a" style="left:1520px;top:820px;" width="14" height="12" viewBox="0 0 14 12"><path d="M0 1 H5 L6 2 H14 V12 H0 Z" fill="#f5c518"/><rect x="0" y="3" width="14" height="9" fill="#ffd23a"/></svg>
<div class="a t" style="left:1543px;top:817px;font-size:16px;line-height:16px;color:#1e1e1e;transform:scaleX(0.9);transform-origin:0 0;">Workflows</div>
<div class="a" style="left:1465px;top:980px;width:403px;height:38px;background:#e1e8f0;"></div>
<div class="a" style="left:1465px;top:982px;width:135px;height:36px;background:#d4dce5;"></div>
<div class="a t" style="left:1471px;top:992px;font-size:16px;line-height:16px;color:#333;transform:scaleX(0.9);transform-origin:0 0;">Project Explorer</div>
<div class="a t" style="left:1607px;top:992px;font-size:16px;line-height:16px;color:#333;transform:scaleX(0.9);transform-origin:0 0;">Server Explorer</div>
<div class="a t" style="left:1738px;top:992px;font-size:16px;line-height:16px;color:#333;transform:scaleX(0.9);transform-origin:0 0;">Report Properties</div>
<div class="a" style="left:512px;top:286px;width:860px;height:669px;background:#fff;border:1px solid #50555b;box-shadow:0 2px 14px 3px rgba(40,45,50,0.35)"></div>
<svg class="a" style="left:523px;top:296px;" width="21" height="19" viewBox="0 0 21 19"><rect x="0.5" y="0.5" width="19.5" height="17.5" fill="#fafafa" stroke="#a8a8a8"/><rect x="0" y="0" width="20.5" height="3" fill="#8a8a8a"/><line x1="1" y1="7" x2="7" y2="7" stroke="#d0d0d0"/><line x1="1" y1="10.5" x2="7" y2="10.5" stroke="#d0d0d0"/><line x1="1" y1="14" x2="7" y2="14" stroke="#d0d0d0"/><line x1="7.5" y1="3" x2="7.5" y2="18" stroke="#c8c8c8"/><path d="M8.5 5 H14 V8 H12.5 V12 H14 V16.5 H8.5 Z" fill="#ecb865"/><path d="M19 8.5 Q15 7.5 13 10" stroke="#3a8fd6" stroke-width="1.6" fill="none"/><path d="M12 8.5 L13 11.5 L15 9.5 Z" fill="#3a8fd6"/></svg>
<div class="a t" style="left:548px;top:297px;font-size:16px;line-height:16px;color:#1e1e1e;transform:scaleX(0.9);transform-origin:0 0;">DataVaultLoad : Pick Table</div>
<div class="a" style="left:1218px;top:305px;width:14px;height:1px;background:#c8c8c8;"></div>
<svg class="a" style="left:1276px;top:299px;" width="14" height="14" viewBox="0 0 14 14"><rect x="0.5" y="0.5" width="12" height="12" fill="none" stroke="#111" stroke-width="1.2"/></svg>
<svg class="a" style="left:1334px;top:299px;" width="15" height="15" viewBox="0 0 15 15"><path d="M1 1 L14 14 M14 1 L1 14" stroke="#111" stroke-width="1.2"/></svg>
<div class="a" style="left:513px;top:325px;width:858px;height:47px;background:#f1f5f9;"></div>
<svg class="a" style="left:526px;top:339px;" width="23" height="23" viewBox="0 0 23 23"><circle cx="11.5" cy="11.5" r="9.5" fill="none" stroke="#3d6fb5" stroke-width="2"/><path d="M6 11.5 H17 M10.5 7 L6 11.5 L10.5 16" fill="none" stroke="#3d6fb5" stroke-width="2.4"/></svg>
<svg class="a" style="left:558px;top:348px;" width="8" height="5" viewBox="0 0 8 5"><path d="M0 0 H7 L3.5 4 Z" fill="#111"/></svg>
<svg class="a" style="left:577px;top:339px;" width="23" height="23" viewBox="0 0 23 23"><circle cx="11.5" cy="11.5" r="9.5" fill="none" stroke="#3d6fb5" stroke-width="2"/><path d="M6 11.5 H17 M12.5 7 L17 11.5 L12.5 16" fill="none" stroke="#3d6fb5" stroke-width="2.4"/></svg>
<svg class="a" style="left:608px;top:348px;" width="8" height="5" viewBox="0 0 8 5"><path d="M0 0 H7 L3.5 4 Z" fill="#111"/></svg>
<div class="a t" style="left:1068px;top:337px;font-size:16px;line-height:16px;color:#1e1e1e;transform:scaleX(0.9);transform-origin:0 0;">Editing:</div>
<div class="a" style="left:1124px;top:333px;width:185px;height:25px;background:#ffffff;"></div>
<div class="a" style="left:1295px;top:335px;width:13px;height:21px;background:#eef1f4;"></div>
<svg class="a" style="left:1297px;top:344px;" width="8" height="5" viewBox="0 0 8 5"><path d="M0 0 H7 L3.5 4 Z" fill="#111"/></svg>
<div class="a t" style="left:1126px;top:337px;font-size:16px;line-height:16px;color:#1e1e1e;transform:scaleX(0.9);transform-origin:0 0;">DataVaultLoad</div>
<div class="a" style="left:517px;top:386px;width:845px;height:63px;border:2px solid #e3e3e3;"></div>
<div class="a" style="left:524px;top:378px;width:120px;height:12px;background:#ffffff;"></div>
<div class="a t" style="left:528px;top:379px;font-size:15.5px;line-height:15.5px;color:#1e1e1e;transform:scaleX(0.96);transform-origin:0 0;">Select entity type</div>
<svg class="a" style="left:529px;top:409px;" width="18" height="18" viewBox="0 0 18 18"><circle cx="9" cy="9" r="7.6" fill="#fff" stroke="#333" stroke-width="1.4"/><circle cx="9" cy="9" r="4" fill="#333"/></svg>
<div class="a t" style="left:554px;top:410px;font-size:16px;line-height:16px;color:#1e1e1e;transform:scaleX(0.9);transform-origin:0 0;">Hub</div>
<svg class="a" style="left:659px;top:409px;" width="18" height="18" viewBox="0 0 18 18"><circle cx="9" cy="9" r="7.6" fill="#fff" stroke="#333" stroke-width="1.4"/></svg>
<div class="a t" style="left:684px;top:410px;font-size:16px;line-height:16px;color:#1e1e1e;transform:scaleX(0.9);transform-origin:0 0;">Link</div>
<svg class="a" style="left:789px;top:409px;" width="18" height="18" viewBox="0 0 18 18"><circle cx="9" cy="9" r="7.6" fill="#fff" stroke="#333" stroke-width="1.4"/></svg>
<div class="a t" style="left:814px;top:410px;font-size:16px;line-height:16px;color:#1e1e1e;transform:scaleX(0.9);transform-origin:0 0;">Satellite</div>
<div class="a" style="left:517px;top:453px;width:845px;height:94px;border:2px solid #e3e3e3;"></div>
<div class="a t" style="left:529px;top:473px;font-size:16px;line-height:16px;color:#1e1e1e;transform:scaleX(0.9);transform-origin:0 0;">Pick Table:</div>
<div class="a" style="left:689px;top:469px;width:458px;height:29px;background:#cce4f7;border:1px solid #1a5da6;"></div>
<div class="a t" style="left:695px;top:475px;font-size:16px;line-height:16px;color:#1e1e1e;transform:scaleX(0.9);transform-origin:0 0;">dbo.OrdersHub</div>
<svg class="a" style="left:1129px;top:480px;" width="13" height="8" viewBox="0 0 13 8"><path d="M1 1 L6.5 6.5 L12 1" fill="none" stroke="#444" stroke-width="1.3"/></svg>
<div class="a" style="left:1147px;top:469px;width:53px;height:29px;background:#f0f0f0;"></div>
<svg class="a" style="left:1152px;top:473px;" width="25" height="24" viewBox="0 0 25 24"><rect x="1.5" y="1.5" width="14" height="15" fill="#fff" stroke="#3b64b0"/><rect x="1" y="1" width="15" height="3" fill="#4a7fd0"/><line x1="4" y1="7" x2="9" y2="7" stroke="#555"/><line x1="4" y1="10" x2="8" y2="10" stroke="#555"/><line x1="4" y1="13" x2="8" y2="13" stroke="#555"/><circle cx="13" cy="13" r="4.5" fill="#dfeaf7" stroke="#b89a4a" stroke-width="1.3"/><path d="M16 16 L21 21" stroke="#e08a2a" stroke-width="3"/></svg>
<svg class="a" style="left:1187px;top:482px;" width="9" height="5" viewBox="0 0 9 5"><path d="M0 0 H9 L4.5 5 Z" fill="#111"/></svg>
<div class="a" style="left:689px;top:498px;width:458px;height:59px;background:#fff;border:1px solid #0078d7;box-shadow:3px 3px 3px rgba(0,0,0,0.35)"></div>
<div class="a" style="left:690px;top:537px;width:456px;height:19px;background:#0078d7;"></div>
<div class="a t" style="left:693px;top:501px;font-size:15.5px;line-height:15.5px;color:#111;transform:scaleX(0.965);transform-origin:0 0;">dbo.CustomersHub</div>
<div class="a t" style="left:693px;top:520px;font-size:15.5px;line-height:15.5px;color:#111;transform:scaleX(0.965);transform-origin:0 0;">dbo.EmployeesHub</div>
<div class="a t" style="left:693px;top:539px;font-size:15.5px;line-height:15.5px;color:#ffffff;transform:scaleX(0.965);transform-origin:0 0;">dbo.OrdersHub</div>
<div class="a" style="left:1037px;top:921px;width:84px;height:33px;background:#f1f5f9;border:1px solid #dde2e7;border-left:2px solid #d9dee3;"></div>
<div class="a t" style="left:1064px;top:929px;font-size:16px;line-height:16px;color:#1e1e1e;transform:scaleX(0.9);transform-origin:0 0;">Prev</div>
<div class="a" style="left:1121px;top:921px;width:84px;height:33px;background:#f1f5f9;border:1px solid #dde2e7;border-left:2px solid #d9dee3;"></div>
<div class="a t" style="left:1148px;top:929px;font-size:16px;line-height:16px;color:#1e1e1e;transform:scaleX(0.9);transform-origin:0 0;">Next</div>
<div class="a" style="left:1205px;top:921px;width:84px;height:33px;background:#f1f5f9;border:1px solid #dde2e7;border-left:2px solid #d9dee3;"></div>
<div class="a t" style="left:1236px;top:929px;font-size:16px;line-height:16px;color:#1e1e1e;transform:scaleX(0.9);transform-origin:0 0;">OK</div>
<div class="a" style="left:1289px;top:921px;width:83px;height:33px;background:#f1f5f9;border:1px solid #dde2e7;border-left:2px solid #d9dee3;"></div>
<div class="a t" style="left:1308px;top:929px;font-size:16px;line-height:16px;color:#1e1e1e;transform:scaleX(0.9);transform-origin:0 0;">Cancel</div>
</body></html>
